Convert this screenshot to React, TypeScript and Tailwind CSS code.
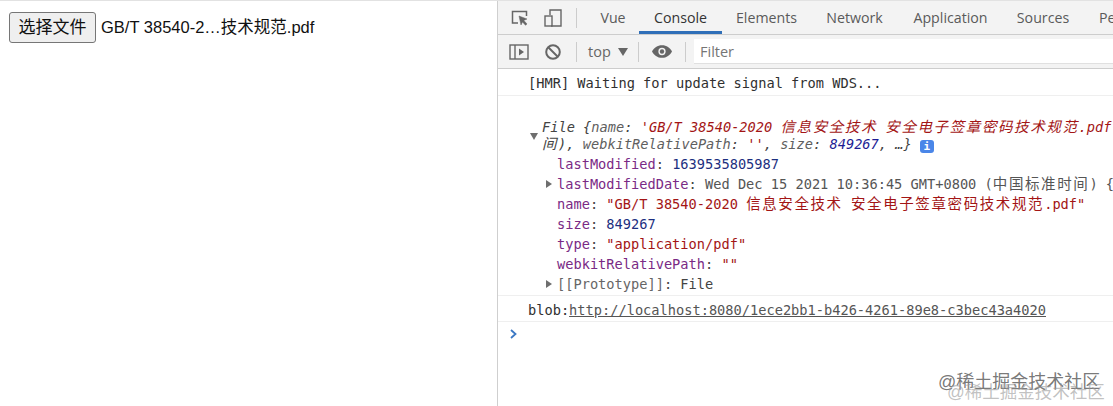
import { ReactNode } from 'react'

const mono = "font-['DejaVu_Sans_Mono','Noto_Sans_CJK_SC',monospace] text-[13.67px] leading-[20px] whitespace-nowrap"
const cjk = "font-['Liberation_Sans','Noto_Sans_CJK_SC',sans-serif]"

const tabs = [
  { label: 'Vue', className: 'w-[52px]' },
  { label: 'Console', className: 'w-[83px] text-[#333] border-b-[3px] border-[#2f6fb8] pt-[3px]' },
  { label: 'Elements', className: 'w-[89px]' },
  { label: 'Network', className: 'w-[87px]' },
  { label: 'Application', className: 'w-[105px]' },
  { label: 'Sources', className: 'w-[80px]' },
  { label: 'Pe', className: 'w-[30px] justify-start pl-[16px]' },
]

function Caret({ open }: { open?: boolean }) {
  return (
    <svg width="10" height="10" viewBox="0 0 10 10" className="absolute left-[-13px] top-[5px] fill-[#6e6e6e]">
      {open ? <path d="M1 2h8L5 9z" /> : <path d="M2 1v8l6-4z" />}
    </svg>
  )
}

// CJK glyphs sit on a double-width cell in the console font
function Wide({ children }: { children: ReactNode }) {
  return <span className="text-[14.5px] tracking-[1.6px]">{children}</span>
}

function Prop({ name, caret, children }: { name: string; caret?: boolean; children: ReactNode }) {
  return (
    <div className="relative h-[20px]">
      {caret && <Caret />}
      <span className="text-[#7a2a85]">{name}</span>
      <span className="text-[#444]">: </span>
      {children}
    </div>
  )
}

export default function App() {
  return (
    <div className="w-[1113px] h-[406px] overflow-hidden bg-white border-t border-[#e2e2e2] flex relative">
      <div className={`w-[497px] shrink-0 flex items-start pt-[11px] pl-[9px] ${cjk}`}>
        <button className="h-[31px] w-[87px] bg-[#efefef] border border-[#767676] rounded-[3px] text-[17px] text-[#111] leading-none">
          选择文件
        </button>
        <span className="ml-[5px] h-[31px] leading-[31px] text-[16.5px] text-[#111] whitespace-nowrap">
          GB/T 38540-2…技术规范.pdf
        </span>
      </div>

      <div className="flex-1 min-w-0 border-l border-[#cfcfcf] flex flex-col overflow-hidden">
        <div className="h-[34px] shrink-0 bg-[#f3f3f3] border-b border-[#cdcdcd] flex items-stretch font-['Open_Sans',sans-serif] text-[14.2px] text-[#5a5a5a]">
          <div className="w-[89px] shrink-0 flex items-center pl-[12px] gap-[13px]">
            <svg width="20" height="20" viewBox="0 0 20 20" fill="none" className="stroke-[#666]">
              <path d="M8 15H2.5V3.5h14V8" strokeWidth="1.5" />
              <path d="M9 8l8 3-3.2 1.4L17 16l-1.5 1.3-3-3.4L11 17z" fill="#666" strokeWidth="0.5" />
            </svg>
            <svg width="20" height="20" viewBox="0 0 20 20" fill="none" className="stroke-[#666]">
              <path d="M7 7V2h11v16H8" strokeWidth="1.4" />
              <rect x="2" y="8" width="7" height="10" strokeWidth="1.4" />
            </svg>
            <div className="w-px h-[20px] bg-[#ccc]" />
          </div>
          {tabs.map((t) => (
            <div key={t.label} className={`shrink-0 flex items-center justify-center overflow-hidden whitespace-nowrap ${t.className}`}>
              {t.label}
            </div>
          ))}
        </div>

        <div className="h-[34px] shrink-0 bg-[#f3f3f3] border-b border-[#cdcdcd] flex items-center font-['Open_Sans',sans-serif] text-[14.5px] text-[#666]">
          <div className="w-[42px] shrink-0 pl-[11px]">
            <svg width="20" height="16" viewBox="0 0 20 16" fill="none">
              <rect x="1" y="1" width="18" height="14" stroke="#666" strokeWidth="1.4" />
              <path d="M6 1v14" stroke="#666" strokeWidth="1.4" />
              <path d="M10 4.5v7l5-3.5z" fill="#666" />
            </svg>
          </div>
          <svg width="18" height="18" viewBox="0 0 18 18" fill="none" className="ml-[4px] shrink-0">
            <circle cx="9" cy="9" r="6.8" stroke="#666" strokeWidth="2" />
            <path d="M4.5 4.5l9 9" stroke="#666" strokeWidth="2" />
          </svg>
          <div className="w-px h-[20px] bg-[#ccc] ml-[14px]" />
          <span className="ml-[11px] w-[29px]">top</span>
          <svg width="10" height="8" viewBox="0 0 10 8" className="ml-[1px] shrink-0 fill-[#666]">
            <path d="M0 0h10L5 8z" />
          </svg>
          <div className="w-px h-[20px] bg-[#ccc] ml-[10px]" />
          <svg width="20" height="13" viewBox="0 0 22 14" className="ml-[13px] shrink-0">
            <path d="M11 0C6 0 2 3 0 7c2 4 6 7 11 7s9-3 11-7c-2-4-6-7-11-7z" fill="#666" />
            <circle cx="11" cy="7" r="4" fill="#f3f3f3" />
            <circle cx="11" cy="7" r="2.4" fill="#666" />
          </svg>
          <div className="w-px h-[20px] bg-[#ccc] ml-[13px]" />
          <div className="ml-[8px] flex-1 h-[25px] bg-white pl-[6px] leading-[26px] text-[#757575] border-b border-[#e0e0e0]">Filter</div>
        </div>

        <div className={mono}>
          <div className="h-[27px] border-b border-[#efefef] pl-[30px] pt-[4px] text-[#303030]">
            [HMR] Waiting for update signal from WDS...
          </div>

          <div className="h-[200px] border-b border-[#efefef] pl-[44px] pt-[23px] relative">
            <div className="relative italic h-[34px] text-[#444]">
              <svg width="10" height="10" viewBox="0 0 10 10" className="absolute left-[-13px] top-[12px] fill-[#6e6e6e]">
                <path d="M1 2h8L5 9z" />
              </svg>
              <div className="h-[17px] leading-[17px]">
                File {'{'}
                <span className="text-[#5f5f5f]">name</span>: <span className="text-[#a31515]">'GB/T 38540-2020 <Wide>信息安全技术</Wide> <Wide>安全电子签章密码技术规范</Wide>.pdf</span>
              </div>
              <div className="h-[17px] leading-[17px]">
                <Wide>间</Wide>
                <span>), </span>
                <span className="text-[#5f5f5f]">webkitRelativePath</span>: <span className="text-[#a31515]">''</span>, <span className="text-[#5f5f5f]">size</span>: <span className="text-[#1c1c94]">849267</span>, …{'}'}
                <span className="inline-block align-[-1px] not-italic w-[14px] h-[13px] ml-[8px] rounded-[3px] bg-[#4a86e8] text-white text-[11px] leading-[13px] text-center font-bold">i</span>
              </div>
            </div>
            <div className="pl-[15px] pt-[1px]">
              <Prop name="lastModified"><span className="text-[#1c2f80]">1639535805987</span></Prop>
              <Prop name="lastModifiedDate" caret><span className="text-[#555]">Wed Dec 15 2021 10:36:45 GMT+0800 (<Wide>中国标准时间</Wide>) {'{'}</span></Prop>
              <Prop name="name"><span className="text-[#a31515]">"GB/T 38540-2020 <Wide>信息安全技术</Wide> <Wide>安全电子签章密码技术规范</Wide>.pdf"</span></Prop>
              <Prop name="size"><span className="text-[#1c2f80]">849267</span></Prop>
              <Prop name="type"><span className="text-[#a31515]">"application/pdf"</span></Prop>
              <Prop name="webkitRelativePath"><span className="text-[#a31515]">""</span></Prop>
              <div className="relative h-[20px]">
                <Caret />
                <span className="text-[#666]">[[Prototype]]</span>
                <span className="text-[#444]">: File</span>
              </div>
            </div>
          </div>

          <div className="h-[26px] border-b border-[#efefef] pl-[30px] pt-[4px] text-[#303030]">
            blob:<span className="underline text-[#555]">http://localhost:8080/1ece2bb1-b426-4261-89e8-c3bec43a4020</span>
          </div>
          <div className="pl-[11px] pt-[6px]">
            <svg width="10" height="12" viewBox="0 0 10 12" fill="none">
              <path d="M2 2l4.5 4L2 10" stroke="#3b78c4" strokeWidth="1.8" />
            </svg>
          </div>
        </div>
      </div>

      <div className={`absolute left-[938px] top-[371px] text-[18px] leading-[20px] text-[#555]/80 whitespace-nowrap ${cjk}`}>@稀土掘金技术社区</div>
      <div className={`absolute left-[947px] top-[381px] text-[17.5px] leading-[20px] text-[#999]/60 whitespace-nowrap ${cjk}`}>@稀土掘金技术社区</div>
    </div>
  )
}
